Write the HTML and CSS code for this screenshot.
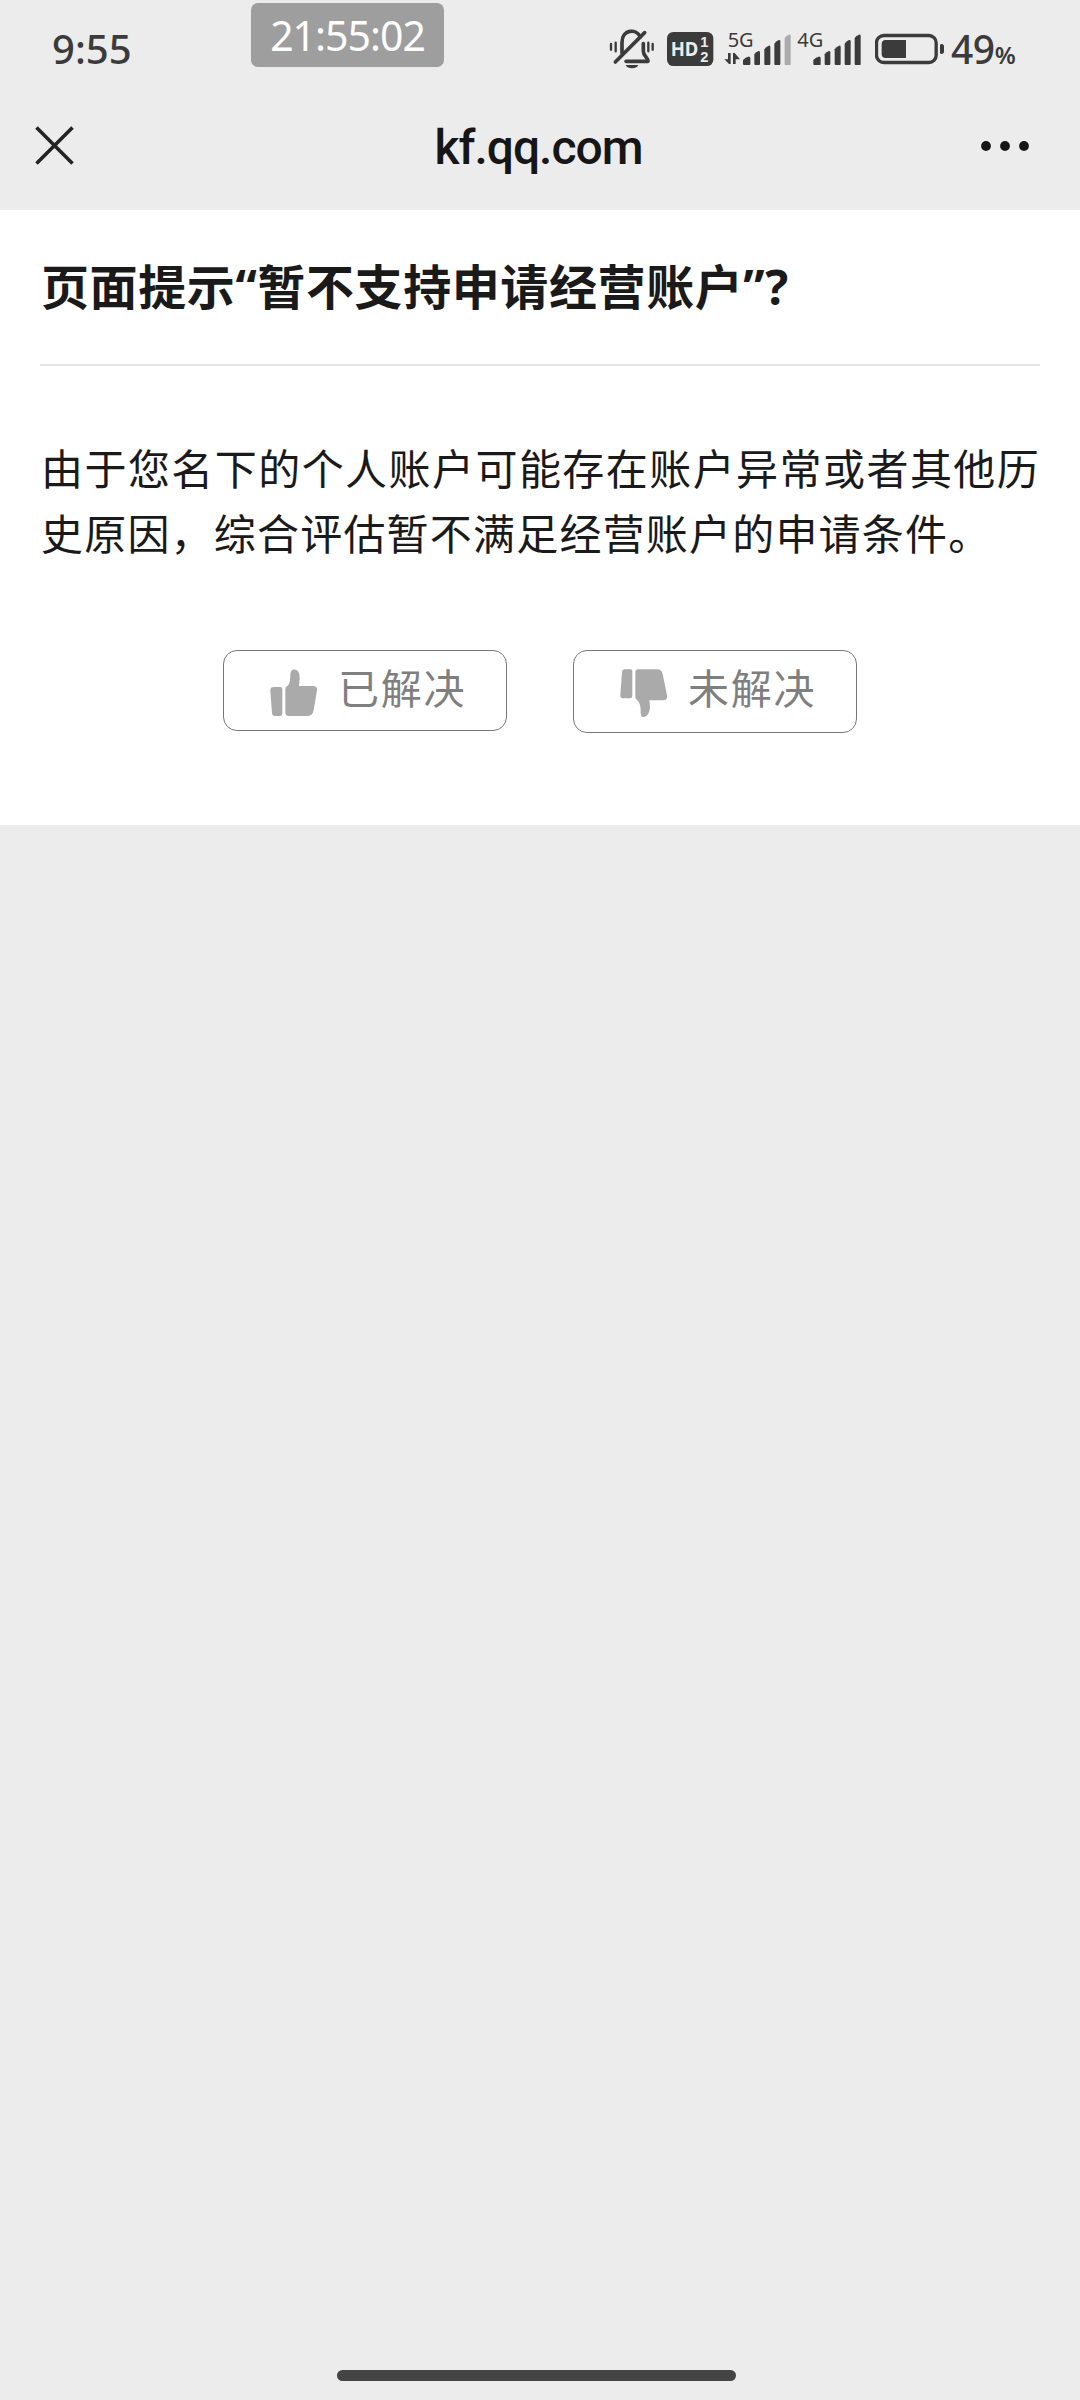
FILE: index.html
```html
<!DOCTYPE html>
<html lang="zh-CN">
<head>
<meta charset="utf-8">
<title>kf.qq.com</title>
<link rel="stylesheet" href="styles.css">
</head>
<body>
<div class="screen">
  <header class="status">
    <span class="clock">9:55</span>
    <div class="indicators">
      <svg class="bell" width="46" height="80" viewBox="57 0 138 240">
        <g fill="none" stroke="#3b3b3b" stroke-width="11" stroke-linecap="round" stroke-linejoin="round">
          <path d="M96 129V97c0-40 44-42 55-16M160 101v23c0 14 14 19 14 30H108"/>
          <path d="M76 156L164 68"/>
          <path stroke-width="7" d="M63 102v17M77 98v26M175 98v26M188 102v17"/>
        </g>
        <path fill="#3b3b3b" d="M107 165h38q-5 10-19 10t-19-10z"/>
      </svg>
      <svg class="hd" width="47" height="80" viewBox="231 0 141 240">
        <rect x="231" y="66" width="139" height="102" rx="19" fill="#3b3b3b"/>
        <text class="hd-main" x="242" y="137" textLength="83" lengthAdjust="spacingAndGlyphs">HD</text>
        <text class="hd-num" x="331" y="111">1</text>
        <text class="hd-num" x="331" y="156">2</text>
      </svg>
      <svg class="sig5" width="68" height="80" viewBox="402 0 204 240">
        <text class="net" x="413" y="110" textLength="78" lengthAdjust="spacingAndGlyphs">5G</text>
        <g fill="#3b3b3b">
          <path d="M403 148h11v-19h8v33h-5zM429 129h5l16 19h-13v14h-8z"/>
          <path d="M459 150q8-9 16-10 6-1 6 5v18q0 2-3 2h-16q-3 0-3-3z"/>
          <path d="M493 133q5-8 13-10 4 0 4 4v35q0 3-3 3h-11q-3 0-3-3z"/>
          <path d="M523 118q5-8 13-11 5-1 5 4v51q0 3-3 3h-12q-3 0-3-3z"/>
          <path d="M553 101q5-8 13-11 5-1 5 4v68q0 3-3 3h-12q-3 0-3-3z"/>
        </g>
        <path fill="#ababab" d="M584 84q5-7 13-10 5-1 5 4v84q0 3-3 3h-12q-3 0-3-3z"/>
      </svg>
      <svg class="sig4" width="64" height="80" viewBox="21 0 192 240">
        <text class="net" x="22" y="110" textLength="78" lengthAdjust="spacingAndGlyphs">4G</text>
        <g fill="#3b3b3b">
          <path d="M70 150q8-9 16-10 6-1 6 5v18q0 2-3 2H73q-3 0-3-3z"/>
          <path d="M104 133q5-8 13-10 4 0 4 4v35q0 3-3 3h-11q-3 0-3-3z"/>
          <path d="M134 118q5-8 13-11 5-1 5 4v51q0 3-3 3h-12q-3 0-3-3z"/>
          <path d="M164 101q5-8 13-11 5-1 5 4v68q0 3-3 3h-12q-3 0-3-3z"/>
          <path d="M194 84q5-7 13-10 5-1 5 4v84q0 3-3 3h-12q-3 0-3-3z"/>
        </g>
      </svg>
      <svg class="battery" width="70" height="80" viewBox="255 0 210 240">
        <rect x="259.500" y="76.500" width="179" height="81" rx="22" fill="none" stroke="#3b3b3b" stroke-width="10"/>
        <path fill="#3b3b3b" d="M287 90h61v54h-61q-12 0-12-12v-30q0-12 12-12zM450 105q1-3 5-3 7 0 7 8v14q0 8-7 8-4 0-5-3z"/>
      </svg>
      <div class="level"><span class="num">49</span><span class="pct">%</span></div>
    </div>
    <div class="stamp"><span class="stamp-text">21:55:02</span></div>
  </header>
  <nav class="nav">
    <svg class="close" width="40" height="40" viewBox="0 0 40 40"><path d="M1.500 1.500L37.500 37.500M37.500 1.500L1.500 37.500" fill="none" stroke="#222" stroke-width="3.600"/></svg>
    <h1 class="host">kf.qq.com</h1>
    <svg class="more" width="50" height="12" viewBox="0 0 50 12" fill="#161616"><circle cx="6" cy="6" r="4.900"/><circle cx="25" cy="6" r="4.900"/><circle cx="44" cy="6" r="4.900"/></svg>
  </nav>
  <main class="article">
    <h2 class="title">页面提示“暂不支持申请经营账户”?</h2>
    <p class="body">由于您名下的个人账户可能存在账户异常或者其他历史原因，综合评估暂不满足经营账户的申请条件。</p>
    <div class="votes">
      <button class="vote up">
        <svg class="thumb" width="48" height="50" viewBox="0 0 144 150" fill="#aaa"><path d="M12 54h19q6 0 6 6v74q0 7-7 7H15q-8 0-9-8L1 65q-1-11 11-11zM46 60q0-5 5-8c9-7 9-17 10-34 0-24 24-20 27-2 2 14 0 22-1 35h41q15 0 13 13l-10 60q-3 17-18 17H60q-14 0-14-10z"/></svg>
        <span class="label">已解决</span>
      </button>
      <button class="vote down">
        <svg class="thumb" width="48" height="50" viewBox="0 0 144 150" fill="#aaa"><path d="M14 1h17q6 0 6 6v74q0 7-7 7H11Q0 88 1 77L6 10q1-9 8-9zM46 10q0-9 9-9h55q15 0 18 14l13 64q3 15-12 15H88c2 15 3 22 0 32-4 14-12 18-19 18q-7 0-7-14c0-18-2-28-10-36q-6-4-6-9z"/></svg>
        <span class="label">未解决</span>
      </button>
    </div>
  </main>
  <div class="home"></div>
</div>
</body>
</html>
```
FILE: styles.css
```css
* { box-sizing: border-box; }
body { margin: 0; background: #ececec; font-family: "Noto Sans", "Noto Sans CJK SC", sans-serif; }
.screen { width: 1080px; height: 2400px; display: flex; flex-direction: column; background: #ececec; }

.status { position: relative; height: 90px; display: flex; justify-content: space-between; align-items: flex-start; padding: 10px 64px 0 52px; color: #3b3b3b; }
.clock { font-size: 40px; line-height: 78px; font-weight: 500; }
.indicators { display: flex; }
.bell { margin-right: 12px; }
.hd { margin-right: 10px; }
.sig5 { margin-right: 5px; }
.sig4 { margin-right: 14px; }
.battery { margin-right: 6px; }
.hd-main { font: 700 60px "Noto Sans", sans-serif; fill: #ececec; }
.hd-num { font: 700 44px "Liberation Sans", sans-serif; fill: #ececec; }
.net { font: 400 58px "Noto Sans", sans-serif; fill: #3b3b3b; }
.level { display: flex; align-items: baseline; width: 65px; line-height: 78px; font-weight: 500; }
.num { font-size: 39px; letter-spacing: -0.5px; }
.pct { font-size: 24px; font-weight: 600; }
.stamp { position: absolute; left: 251px; top: 3px; width: 193px; height: 64px; border-radius: 7px; background: #9e9e9e; color: #fff; display: flex; justify-content: center; align-items: center; }
.stamp-text { font-size: 41px; line-height: 64px; letter-spacing: -1px; }

.nav { height: 120px; display: flex; align-items: center; padding: 0 50px 8px 35px; }
.host { flex: 1; margin: 0; padding: 2px 0 0 22px; text-align: center; font: 500 48px "Roboto", sans-serif; color: #161616; letter-spacing: -1px; }

.article { height: 615px; background: #fff; padding: 0 40px; }
.title { margin: 0; height: 156px; padding: 42px 0 0 1px; border-bottom: 2px solid #e4e4e4; font-size: 48px; letter-spacing: 0.600px; line-height: 70px; font-weight: 700; color: #1a1a1a; }
.body { margin: 70px 0 0 1px; font-size: 42px; letter-spacing: 1.200px; line-height: 65.300px; text-align: justify; color: #1a1a1a; }
.votes { display: flex; justify-content: center; gap: 66px; margin-top: 83px; align-items: flex-start; }
.vote { width: 284px; height: 81px; display: flex; align-items: flex-start; padding: 18px 0 0 46px; gap: 20px; border: 1px solid #777; border-radius: 14px; background: #fff; font-family: "Noto Sans CJK SC", sans-serif; color: #7f7f7f; }
.down { height: 83px; }
.label { font-size: 41px; letter-spacing: 1.800px; line-height: 44px; margin-top: -5px; }

.home { width: 399px; height: 11px; margin: auto 0 19px 337px; border-radius: 6px; background: #444; }
```
